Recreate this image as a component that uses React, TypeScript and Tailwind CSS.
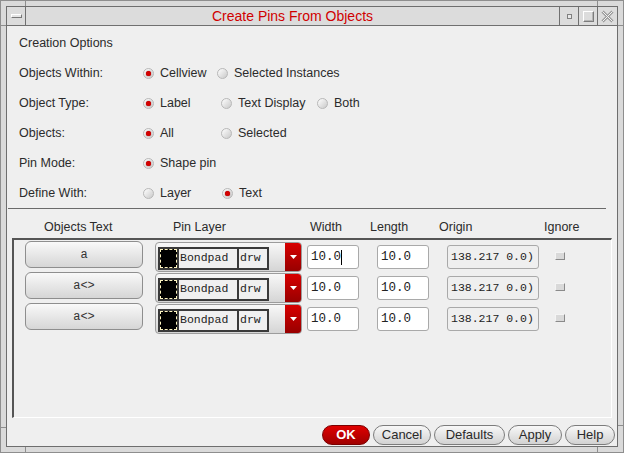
import type { ReactNode } from 'react'

function Radio({ on }: { on?: boolean }) {
  return (
    <span className="w-[11px] h-[11px] shrink-0 rounded-full border border-[#b8b8b8] bg-linear-to-br from-white to-[#c9c9c9] flex items-center justify-center">
      {on && <span className="w-[5px] h-[5px] rounded-full bg-[#d40000] shadow-[0_0_1px_#700]" />}
    </span>
  )
}

function Option({ on, label, w }: { on?: boolean; label: string; w?: string }) {
  return (
    <span className={`flex items-center gap-[6px] ${w ?? ''}`}>
      <Radio on={on} />
      <span>{label}</span>
    </span>
  )
}

function Row({ label, children }: { label: string; children: ReactNode }) {
  return (
    <div className="flex items-center h-[30px] pl-[12px]">
      <span className="w-[124px]">{label}</span>
      {children}
    </div>
  )
}

function Field({ value, w, ro, cursor }: { value: string; w: string; ro?: boolean; cursor?: boolean }) {
  return (
    <div
      className={`${w} h-[24px] mt-[5px] rounded-[3px] border border-[#a9a9a9] flex items-center pl-[3px] font-['Liberation_Mono',monospace] text-[#222] ${
        ro ? 'bg-[#efefef] text-[11.5px]' : 'bg-white text-[12.5px]'
      }`}
    >
      <span>{value}</span>
      {cursor && <span className="w-px h-[15px] bg-black" />}
    </div>
  )
}

function LayerCombo() {
  return (
    <div className="ml-[12px] mt-[2px] w-[147px] h-[30px] flex rounded-[4px] border border-[#9c9c9c] bg-linear-to-b from-[#f8f8f8] to-[#d5d5d5]">
      <div className="flex-1 flex items-center pl-[2px] pt-[2px]">
        <div className="flex gap-[2px] p-[2px] bg-[#3a3a3a]">
          <div className="w-[17px] h-[19px] bg-black border border-dashed border-[#fff6c2]" />
          <div className="w-[58px] h-[19px] bg-[#f0f0f0] flex items-center pl-[1px] font-['Liberation_Mono',monospace] text-[11.5px] text-[#222]">Bondpad</div>
          <div className="w-[28px] h-[19px] bg-[#f0f0f0] flex items-center pl-[1px] font-['Liberation_Mono',monospace] text-[11.5px] text-[#222]">drw</div>
        </div>
      </div>
      <div className="w-[16px] rounded-r-[3px] bg-linear-to-b from-[#d80000] to-[#980000] flex items-center justify-center">
        <svg width="7" height="4" viewBox="0 0 7 4">
          <polygon points="0,0 7,0 3.5,4" fill="#fff" />
        </svg>
      </div>
    </div>
  )
}

function PillButton({ label, w, primary }: { label: string; w: string; primary?: boolean }) {
  return (
    <div
      className={`${w} h-[20px] rounded-full border flex items-center justify-center text-[13px] ${
        primary
          ? 'border-[#7a0000] bg-linear-to-b from-[#e00000] to-[#a00000] text-white font-bold'
          : 'border-[#7c7c7c] bg-linear-to-b from-[#f8f8f8] to-[#d2d2d2] text-[#2a2a2a]'
      }`}
    >
      {label}
    </div>
  )
}

export default function App() {
  const pins = [
    { text: 'a', cursor: true },
    { text: 'a<>', cursor: false },
    { text: 'a<>', cursor: false },
  ]

  return (
    <div className="relative w-[624px] h-[453px] border border-[#8e8e8e] bg-[#dadada] p-[5px] font-['Liberation_Sans',Arial,sans-serif] text-[#2b2b2b]">
      {/* frame corner marks */}
      <div className="absolute left-[24px] top-0 w-px h-[5px] bg-[#8e8e8e]" />
      <div className="absolute left-[596px] top-0 w-px h-[5px] bg-[#8e8e8e]" />
      <div className="absolute left-[24px] bottom-0 w-px h-[5px] bg-[#8e8e8e]" />
      <div className="absolute left-[596px] bottom-0 w-px h-[5px] bg-[#8e8e8e]" />
      <div className="absolute left-0 top-[24px] w-[5px] h-px bg-[#8e8e8e]" />
      <div className="absolute left-0 top-[426px] w-[5px] h-px bg-[#8e8e8e]" />
      <div className="absolute right-0 top-[24px] w-[5px] h-px bg-[#8e8e8e]" />
      <div className="absolute right-0 top-[424px] w-[5px] h-px bg-[#8e8e8e]" />

      <div className="w-full h-full border border-[#6e6e6e] flex flex-col bg-[#efefef]">
        {/* title bar */}
        <div className="h-[19px] shrink-0 flex border-b border-[#707070] bg-[#dcdcdc]">
          <div className="w-[19px] border-r border-[#707070] flex items-center justify-center">
            <div className="w-[11px] h-[4px] bg-[#e4e4e4] border-t border-l border-white border-r border-b border-r-[#777] border-b-[#777]" />
          </div>
          <div className="flex-1 flex items-center justify-center text-[14px] text-[#d00000]">Create Pins From Objects</div>
          <div className="w-[19px] border-l border-[#707070] flex items-center justify-center">
            <div className="w-[5px] h-[5px] border border-[#808080] bg-[#e8e8e8]" />
          </div>
          <div className="w-[19px] border-l border-[#707070] flex items-center justify-center">
            <div className="w-[11px] h-[11px] border border-t-white border-l-white border-r-[#7c7c7c] border-b-[#7c7c7c] shadow-[inset_-1px_-1px_0_#b5b5b5]" />
          </div>
          <div className="w-[20px] border-l border-[#707070] flex items-center justify-center">
            <svg width="13" height="13" viewBox="0 0 13 13">
              <path d="M1.5 1.5 L11.5 11.5 M11.5 1.5 L1.5 11.5" stroke="#9a9a9a" strokeWidth="3" />
              <path d="M1.5 1.5 L11.5 11.5 M11.5 1.5 L1.5 11.5" stroke="#f2f2f2" strokeWidth="1" />
            </svg>
          </div>
        </div>

        {/* options */}
        <div className="pt-[3px] text-[12.5px]">
          <div className="h-[29px] flex items-center pl-[12px]">Creation Options</div>
          <Row label="Objects Within:">
            <Option on label="Cellview" w="w-[74px]" />
            <Option label="Selected Instances" />
          </Row>
          <Row label="Object Type:">
            <Option on label="Label" w="w-[78px]" />
            <Option label="Text Display" w="w-[96px]" />
            <Option label="Both" />
          </Row>
          <Row label="Objects:">
            <Option on label="All" w="w-[78px]" />
            <Option label="Selected" />
          </Row>
          <Row label="Pin Mode:">
            <Option on label="Shape pin" />
          </Row>
          <Row label="Define With:">
            <Option label="Layer" w="w-[79px]" />
            <Option on label="Text" />
          </Row>
        </div>

        <div className="ml-[1px] w-[598px] h-px bg-[#6a6a6a]" />

        {/* column headers */}
        <div className="h-[29px] pt-[8px] flex items-center pl-[37px] text-[12.5px]">
          <span className="w-[129px]">Objects Text</span>
          <span className="w-[137px]">Pin Layer</span>
          <span className="w-[60px]">Width</span>
          <span className="w-[69px]">Length</span>
          <span className="w-[105px]">Origin</span>
          <span>Ignore</span>
        </div>

        {/* table */}
        <div className="ml-[5px] w-[600px] h-[180px] border-t-2 border-l-2 border-t-[#555] border-l-[#555] border-r border-b border-r-white border-b-white">
          {pins.map((p, i) => (
            <div key={i} className="h-[31px] flex items-start pl-[11px]">
              <div className="mt-[1px] w-[118px] h-[27px] rounded-[6px] border border-[#8e8e8e] bg-linear-to-b from-[#f9f9f9] to-[#d6d6d6] flex items-center justify-center font-['Liberation_Mono',monospace] text-[12px] text-[#333]">
                {p.text}
              </div>
              <LayerCombo />
              <div className="ml-[5px]">
                <Field value="10.0" w="w-[52px]" cursor={p.cursor} />
              </div>
              <div className="ml-[18px]">
                <Field value="10.0" w="w-[52px]" />
              </div>
              <div className="ml-[18px]">
                <Field value="138.217 0.0)" w="w-[92px]" ro />
              </div>
              <div className="ml-[16px] mt-[12px] w-[10px] h-[8px] bg-[#d9d9d9] border-b border-r border-[#8a8a8a] border-t border-l border-t-[#f4f4f4] border-l-[#f4f4f4]" />
            </div>
          ))}
        </div>

        {/* buttons */}
        <div className="mt-[7px] flex justify-end pr-[2px] gap-[3px]">
          <PillButton label="OK" w="w-[48px]" primary />
          <PillButton label="Cancel" w="w-[58px]" />
          <PillButton label="Defaults" w="w-[71px]" />
          <PillButton label="Apply" w="w-[54px]" />
          <PillButton label="Help" w="w-[50px]" />
        </div>
      </div>
    </div>
  )
}
